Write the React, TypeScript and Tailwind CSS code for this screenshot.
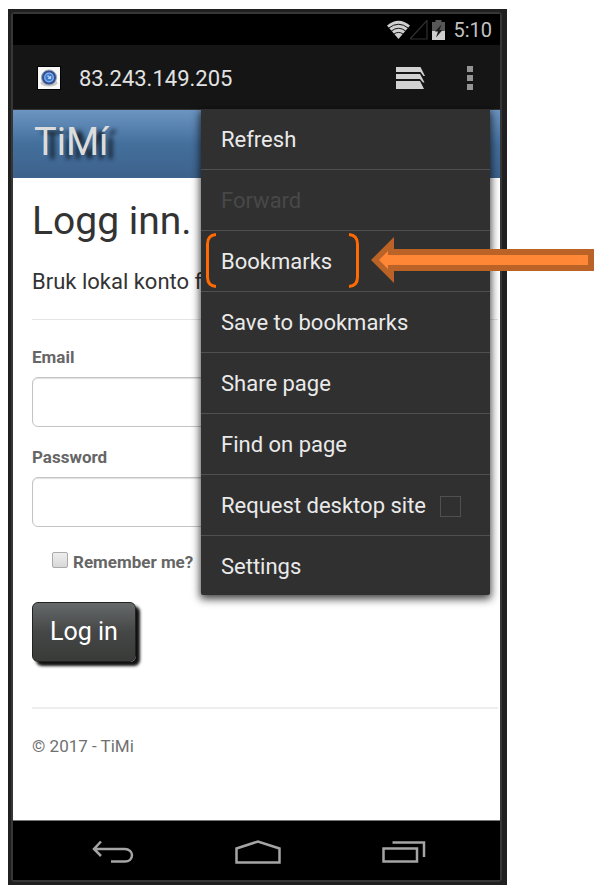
import React from "react";

function StatusBar() {
  return (
    <div className="flex h-[31px] items-center justify-end bg-black pr-2 text-[#c2c2c2]">
      <svg className="h-5 w-[23px]" viewBox="0 0 23 20" aria-hidden="true">
        <path d="M0 5.500 Q11.500 -4 23 5.500 L11.500 19 Z" fill="#cfcfcf" />
        <path d="M1.800 8 Q11.500 0.500 21.200 8 M4.300 11 Q11.500 5.500 18.700 11 M7 14 Q11.500 10.800 16 14" fill="none" stroke="#111" strokeWidth="1" />
      </svg>
      <svg className="h-5 w-[18px]" viewBox="0 0 18 20" aria-hidden="true">
        <path d="M17 0.500 V19 H0 Z" fill="none" stroke="#303030" strokeWidth="1.200" />
      </svg>
      <svg className="ml-1 h-5 w-[13px]" viewBox="0 0 13 20" aria-hidden="true">
        <path d="M3.500 0 H9.500 V2 H13 V11 H0 V2 H3.500 Z" fill="#575757" />
        <path d="M0 11 H13 V20 H0 Z" fill="#cfcfcf" />
        <path d="M9.500 4.500 L3 11.500 H6 L4 17.500 L10.500 10 H7.500 Z" fill="#1c1c1c" />
      </svg>
      <time className="ml-2 text-xl leading-6">5:10</time>
    </div>
  );
}

function Toolbar() {
  return (
    <div className="flex h-16 items-center bg-[#151515] pt-0.5 pr-2.5 pl-6">
      <svg className="h-6 w-6" viewBox="0 0 24 24" aria-hidden="true">
        <rect width="24" height="24" fill="#000" />
        <rect x="1" y="1" width="22" height="22" fill="#f7f7f7" />
        <ellipse cx="12" cy="17" rx="8.500" ry="3.500" fill="#c8c8c8" />
        <circle cx="12" cy="11.500" r="7.500" fill="#2c4f97" stroke="#a5a5a5" />
        <circle cx="12" cy="11.500" r="4.300" fill="#3f78cc" stroke="#8dbaf0" strokeWidth="1.200" />
        <path d="M10.500 9.500 L13.500 12.500 M13.500 10 V12.500 H11" fill="none" stroke="#b5d3f7" strokeWidth="1.200" />
      </svg>
      <span className="ml-[18px] grow pt-0.5 text-[22px] leading-7 text-[#e2e2e2]">83.243.149.205</span>
      <button aria-label="Tabs" className="flex h-10 w-10 items-center justify-center">
        <svg className="h-6 w-[30px]" viewBox="0 0 30 24" fill="#d2d2d2" aria-hidden="true">
          <path d="M1 1 H25.500 L30 10 H28.500 L25.500 6 H1 Z" />
          <path d="M1 8 H25 L29.500 16.500 H28 L25 13 H1 Z" />
          <path d="M1 15 H25 L29 23 H1 Z" />
        </svg>
      </button>
      <button aria-label="More options" className="ml-5 flex h-10 w-10 flex-col items-center justify-center gap-[3px]">
        <i className="h-1.5 w-1.5 bg-[#949494]" />
        <i className="h-1.5 w-1.5 bg-[#949494]" />
        <i className="h-1.5 w-1.5 bg-[#949494]" />
      </button>
    </div>
  );
}

const itemClass =
  "relative flex h-[61px] w-full items-center border-b border-[#505050] px-5 pt-0.5 text-left text-[22px] leading-7 last:h-[59px] last:border-b-0 disabled:text-[#484848]";

function Menu() {
  return (
    <nav className="absolute top-[-1px] right-2.5 w-[289px] rounded-b-xs bg-[#303030] text-[#eaeaea] shadow-[0_3px_8px_1px_rgba(0,0,0,0.75)]">
      <button className={itemClass}>Refresh</button>
      <button className={itemClass} disabled>Forward</button>
      <button className={itemClass}>
        Bookmarks
        <svg className="absolute top-0.5 left-[5px] h-[55px] w-[153px]" viewBox="0 0 153 55" fill="none" stroke="#ff6a05" strokeWidth="3" aria-hidden="true">
          <path d="M10 1.500 C4 2 1.500 6 1.500 11 V44 C1.500 49 4 53 10 53.500" />
          <path d="M143 1.500 C149 2 151.500 6 151.500 11 V44 C151.500 49 149 53 143 53.500" />
        </svg>
      </button>
      <button className={itemClass}>Save to bookmarks</button>
      <button className={itemClass}>Share page</button>
      <button className={itemClass}>Find on page</button>
      <label className={itemClass}>
        Request desktop site
        <input type="checkbox" className="ml-3.5 h-[21px] w-[21px] appearance-none border border-[#505050]" />
      </label>
      <button className={itemClass}>Settings</button>
    </nav>
  );
}

const fieldClass =
  "mt-2 mb-[18px] block h-[50px] w-full rounded-md border border-[#c4c4c4] bg-white px-3 text-lg shadow-[inset_0_1px_1px_rgba(0,0,0,0.12)]";

function LoginPage() {
  return (
    <div className="grow bg-white text-[#333]">
      <header className="flex h-[68px] items-center bg-linear-to-b from-[#6c95c2] via-[#446f9c] to-[#3d628c] px-[21px] pb-1">
        <span className="text-[38px] leading-[48px] text-[#dcdcdc] [text-shadow:7px_4px_4px_#14202c]">TiMí</span>
      </header>
      <main className="pt-5 pr-0.5 pl-[19px]">
        <h1 className="text-[39px] leading-[46px]">Logg inn.</h1>
        <p className="mt-6 text-[22px] leading-7">Bruk lokal konto f</p>
        <hr className="mt-[23px] border-[#e4e4e4]" />
        <form className="mt-[25px] pr-5 text-[17px] leading-6 text-[#666]">
          <label htmlFor="email" className="block font-bold">Email</label>
          <input id="email" type="email" className={fieldClass} />
          <label htmlFor="password" className="block font-bold">Password</label>
          <input id="password" type="password" className={fieldClass} />
          <label className="ml-5 flex items-center gap-[5px] pt-[5px] font-bold">
            <input type="checkbox" className="mb-1 h-4 w-4 appearance-none rounded-xs border border-[#aaa] bg-linear-to-b from-[#eee] to-[#d8d8d8]" />
            Remember me?
          </label>
          <button type="button" className="mt-7 h-[60px] w-[104px] rounded-md border border-[#222] bg-linear-to-b from-[#666a6b] via-[#454746] to-[#393b39] text-[25px] text-white shadow-[4px_4px_3px_#111]">
            Log in
          </button>
        </form>
        <hr className="mt-[45px] border-t-2 border-[#eee]" />
        <footer className="mt-[25px] text-[17px] leading-6 text-[#707070]">© 2017 - TiMi</footer>
      </main>
    </div>
  );
}

function NavigationBar() {
  return (
    <div className="flex h-[60px] items-center justify-around border-t border-[#777] bg-black pt-0.5 pr-6 pl-7">
      <button aria-label="Back">
        <svg className="h-6 w-[42px]" viewBox="0 0 42 24" fill="none" stroke="#a5a5a5" strokeWidth="2.500" aria-hidden="true">
          <path d="M9 1.500 L2 9 L9 16 M2 9 H33 C37 9 40 12 40 15 C40 19 37 21.500 33 21.500 H19" />
        </svg>
      </button>
      <button aria-label="Home">
        <svg className="h-6 w-[46px]" viewBox="0 0 46 24" fill="none" stroke="#a5a5a5" strokeWidth="2.500" aria-hidden="true">
          <path d="M1.500 22.500 V8.500 L23 1.500 L44.500 8.500 V22.500 Z" />
        </svg>
      </button>
      <button aria-label="Recent apps">
        <svg className="h-6 w-11" viewBox="0 0 44 24" fill="none" stroke="#a5a5a5" strokeWidth="2.500" aria-hidden="true">
          <path d="M1.500 8.500 H35 V21.500 H1.500 Z M10.500 2.500 H42 V17" />
        </svg>
      </button>
    </div>
  );
}

export default function App() {
  return (
    <div className="relative min-h-screen bg-white pt-[9px] pr-[99px] pb-[11px] pl-2 font-['Roboto',sans-serif]">
      <div className="bg-[#202020] py-[3px] pr-[5px] pl-[3px]">
        <div className="flex min-h-[870px] flex-col rounded-sm border-2 border-[#363636]">
          <StatusBar />
          <Toolbar />
          <div className="h-px bg-[#333]" />
          <div className="relative flex grow flex-col">
            <LoginPage />
            <Menu />
          </div>
          <NavigationBar />
        </div>
      </div>
      <svg className="absolute top-[237px] right-3 h-[46px] w-[223px]" viewBox="0 0 223 46" aria-hidden="true">
        <path d="M0 23 L23 0 V12 H223 V34 H23 V46 Z" fill="#bb6326" />
        <path d="M8 23 L17 14 V18 H217 V28 H17 V32 Z" fill="#ff8736" />
      </svg>
    </div>
  );
}
